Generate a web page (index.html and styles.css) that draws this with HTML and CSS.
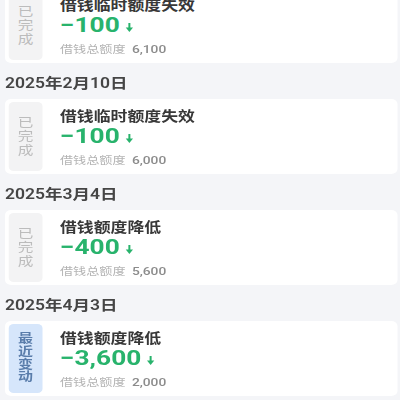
FILE: index.html
```html
<!DOCTYPE html>
<html lang="zh-CN">
<head>
<meta charset="utf-8">
<title>借钱额度记录</title>
<link rel="stylesheet" href="styles.css">
</head>
<body>
<div class="page">
  <div class="card first">
    <div class="badge"><span>已<br>完<br>成</span></div>
    <div class="info">
      <div class="title">借钱临时额度失效</div>
      <div class="amount">−100<svg class="arrow" viewBox="0 0 7 9"><path d="M3.5 0v5" stroke="currentColor" stroke-width="1.6"/><path d="M0.6 4.6h5.8L3.5 9z" fill="currentColor"/></svg></div>
      <div class="sub">借钱总额度<span class="num">6,100</span></div>
    </div>
  </div>
  <div class="date">2025年2月10日</div>
  <div class="card">
    <div class="badge"><span>已<br>完<br>成</span></div>
    <div class="info">
      <div class="title">借钱临时额度失效</div>
      <div class="amount">−100<svg class="arrow" viewBox="0 0 7 9"><path d="M3.5 0v5" stroke="currentColor" stroke-width="1.6"/><path d="M0.6 4.6h5.8L3.5 9z" fill="currentColor"/></svg></div>
      <div class="sub">借钱总额度<span class="num">6,000</span></div>
    </div>
  </div>
  <div class="date">2025年3月4日</div>
  <div class="card">
    <div class="badge"><span>已<br>完<br>成</span></div>
    <div class="info">
      <div class="title">借钱额度降低</div>
      <div class="amount">−400<svg class="arrow" viewBox="0 0 7 9"><path d="M3.5 0v5" stroke="currentColor" stroke-width="1.6"/><path d="M0.6 4.6h5.8L3.5 9z" fill="currentColor"/></svg></div>
      <div class="sub">借钱总额度<span class="num">5,600</span></div>
    </div>
  </div>
  <div class="date">2025年4月3日</div>
  <div class="card">
    <div class="badge recent"><span>最<br>近<br>变<br>动</span></div>
    <div class="info">
      <div class="title">借钱额度降低</div>
      <div class="amount">−3,600<svg class="arrow" viewBox="0 0 7 9"><path d="M3.5 0v5" stroke="currentColor" stroke-width="1.6"/><path d="M0.6 4.6h5.8L3.5 9z" fill="currentColor"/></svg></div>
      <div class="sub">借钱总额度<span class="num">2,000</span></div>
    </div>
  </div>
</div>
</body>
</html>
```
FILE: styles.css
```css
html, body {
  margin: 0;
  padding: 0;
  background: #f4f5f8;
  overflow: hidden;
}
body {
  font-family: "Roboto", "Noto Sans CJK SC", sans-serif;
  color: #333;
}
.page {
  width: 320px;
  transform: scaleX(1.25);
  transform-origin: 0 0;
}
.card {
  height: 75px;
  box-sizing: border-box;
  margin: 0 2px 0 4px;
  padding: 3px;
  background: #fff;
  border-radius: 5px;
  display: flex;
  gap: 14px;
}
.card.first {
  margin-top: -12px;
}
.badge {
  width: 27px;
  flex: none;
  background: #f3f3f4;
  border-radius: 4px;
  color: #bcbcbc;
  font-size: 12.5px;
  line-height: 14px;
  display: flex;
  align-items: center;
  justify-content: center;
  text-align: center;
}
.badge.recent {
  background: #d6e6fb;
  color: #5a7dab;
  font-size: 12px;
  line-height: 12.8px;
  font-weight: 600;
}
.info {
  padding-top: 5px;
  display: flex;
  flex-direction: column;
}
.title {
  font-size: 13.5px;
  line-height: 18px;
  font-weight: 600;
  color: #383838;
}
.amount {
  font-size: 21px;
  line-height: 22px;
  font-weight: 700;
  color: #28b36c;
  display: flex;
  align-items: baseline;
}
.arrow {
  width: 7px;
  height: 9px;
  margin-left: 4px;
  color: #28b36c;
}
.sub {
  margin-top: 6px;
  font-size: 10.5px;
  line-height: 16px;
  color: #b4b4b4;
}
.num {
  font-size: 11px;
  font-weight: 500;
  color: #8c8c8c;
  margin-left: 5px;
}
.date {
  height: 36px;
  box-sizing: border-box;
  padding: 2px 0 0 4px;
  display: flex;
  align-items: center;
  font-size: 14px;
  font-weight: 600;
  color: #454545;
}
```
